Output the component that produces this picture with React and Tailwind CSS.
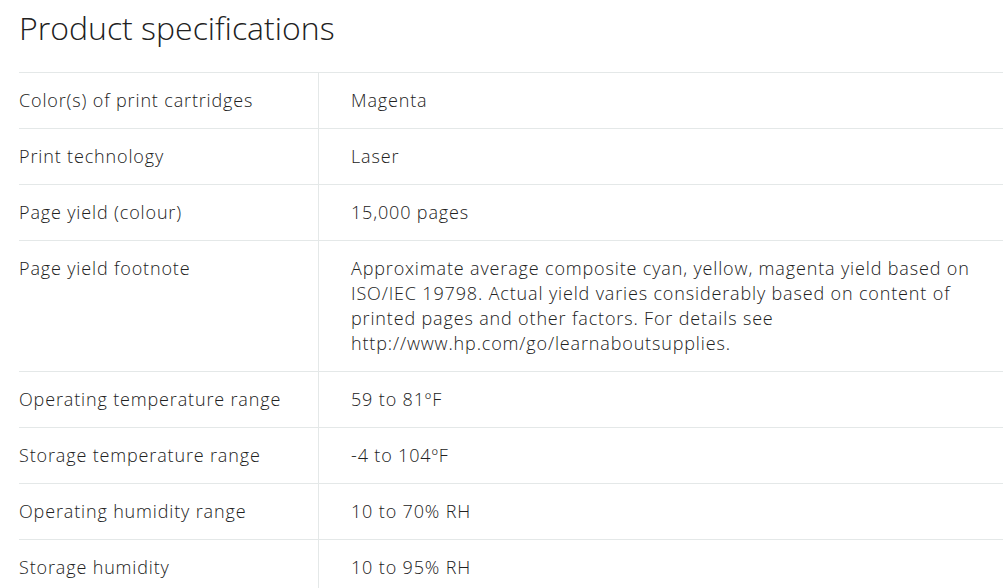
const SPECS = [
    { label: "Color(s) of print cartridges", value: "Magenta" },
    { label: "Print technology", value: "Laser" },
    { label: "Page yield (colour)", value: "15,000 pages" },
    {
        label: "Page yield footnote",
        value: "Approximate average composite cyan, yellow, magenta yield based on ISO/IEC 19798. Actual yield varies considerably based on content of printed pages and other factors. For details see http://www.hp.com/go/learnaboutsupplies.",
    },
    { label: "Operating temperature range", value: "59 to 81ºF" },
    { label: "Storage temperature range", value: "-4 to 104ºF" },
    { label: "Operating humidity range", value: "10 to 70% RH" },
    { label: "Storage humidity", value: "10 to 95% RH" },
];

export default function App() {
    return (
        <div className="min-h-[588px] bg-white pl-[19px] font-['Open_Sans',sans-serif] font-light text-[#212121]">
            {/* Heading */}
            <h1 className="pt-[6px] h-[72px] text-[32px] leading-[44px] font-light">
                Product specifications
            </h1>

            {/* Spec table */}
            <div className="border-t border-[#e4e8e8]">
                {SPECS.map((row) => (
                    <div key={row.label} className="flex border-b border-[#e4e8e8] text-[18px] leading-[25px] tracking-[0.85px]">
                        <div className="w-[300px] shrink-0 border-r border-[#e4e8e8] py-[15px]">
                            {row.label}
                        </div>
                        <div className="w-[682px] pl-[32px] py-[15px]">
                            {row.value}
                        </div>
                    </div>
                ))}
            </div>
        </div>
    );
}
